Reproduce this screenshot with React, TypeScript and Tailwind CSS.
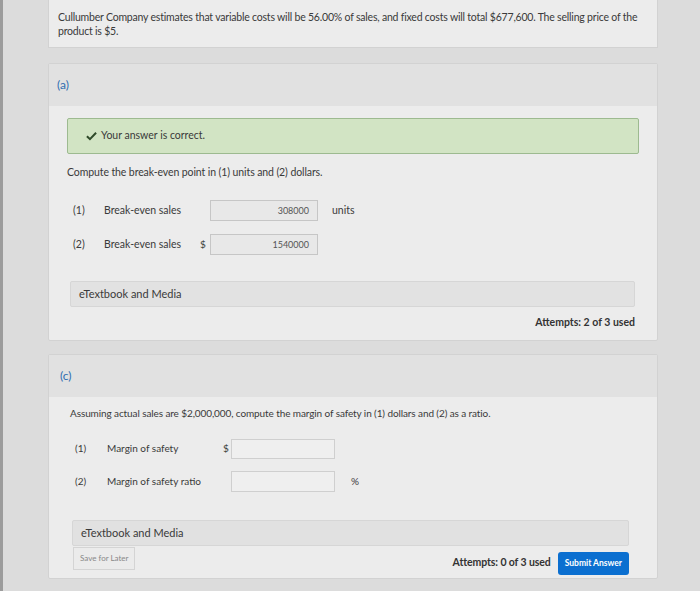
import React from "react";

function Field({ value, w }: { value?: string; w: string }) {
    return (
        <div
            className={`${w} h-[21px] border border-[#c6c6c6] bg-[#e8e8e8] flex items-center justify-end pr-[8px] text-[9px] text-[#555]`}
        >
            {value}
        </div>
    );
}

function CheckIcon() {
    return (
        <svg width="11" height="10" viewBox="0 0 12 10">
            <path
                d="M1 5.2 L4.3 8.4 L11 1.4"
                fill="none"
                stroke="#2f4a2a"
                strokeWidth="2.2"
            />
        </svg>
    );
}

export default function App() {
    return (
        <div className="w-[700px] min-h-[591px] bg-[#dcdcdc] border-l-[3px] border-[#9c9c9c] font-['Lato','Open_Sans',sans-serif] text-[#3a3a3a] overflow-hidden">
            <div className="ml-[45px] mr-[42px] pb-[14px]">
                {/* Problem statement */}
                <div className="h-[48px] bg-[#ececec] border-x border-b border-[#d2d2d2] px-[9px] pt-[10px] text-[10.5px] leading-[14px] tracking-[-0.2px]">
                    <p className="w-[592px]">
                        Cullumber Company estimates that variable costs will be
                        56.00% of sales, and fixed costs will total $677,600.
                        The selling price of the product is $5.
                    </p>
                </div>

                {/* Part (a) */}
                <div className="mt-[15px] bg-[#ececec] border border-[#d2d2d2] rounded-[2px]">
                    <div className="h-[42px] bg-[#e1e1e1] px-[8px] flex items-center text-[12px] text-[#2f6db0]">
                        (a)
                    </div>
                    <div className="pl-[18px] pr-[18px] pt-[12px] pb-[9px] text-[10.5px]">
                        <div className="h-[36px] bg-[#d2e4c4] border border-[#9dba90] rounded-[2px] flex items-center pl-[18px] gap-[4px]">
                            <CheckIcon />
                            <span>Your answer is correct.</span>
                        </div>
                        <p className="mt-[11px] leading-[14px] tracking-[-0.1px]">
                            Compute the break-even point in (1) units and (2)
                            dollars.
                        </p>
                        <div className="mt-[21px] flex items-center">
                            <span className="w-[37px] pl-[6px]">(1)</span>
                            <span className="w-[96px]">Break-even sales</span>
                            <span className="w-[10px]"></span>
                            <Field value="308000" w="w-[108px]" />
                            <span className="ml-[14px]">units</span>
                        </div>
                        <div className="mt-[13px] flex items-center">
                            <span className="w-[37px] pl-[6px]">(2)</span>
                            <span className="w-[96px]">Break-even sales</span>
                            <span className="w-[10px] text-[10px]">$</span>
                            <Field value="1540000" w="w-[108px]" />
                        </div>
                        <div className="mt-[26px] ml-[3px] mr-[4px] h-[26px] bg-[#e2e2e2] border border-[#d6d6d6] rounded-[2px] flex items-center pl-[8px] text-[11px]">
                            eTextbook and Media
                        </div>
                        <div className="mt-[8px] mr-[4px] flex justify-end font-bold text-[10.5px] text-[#333]">
                            Attempts: 2 of 3 used
                        </div>
                    </div>
                </div>

                {/* Part (c) */}
                <div className="mt-[13px] bg-[#ececec] border border-[#d2d2d2] rounded-[2px]">
                    <div className="h-[42px] bg-[#e1e1e1] px-[11px] flex items-center text-[12px] text-[#2f6db0]">
                        (c)
                    </div>
                    <div className="pl-[21px] pr-[28px] pt-[9px] pb-[3px] text-[10px]">
                        <p className="leading-[14px] tracking-[-0.1px]">
                            Assuming actual sales are $2,000,000, compute the
                            margin of safety in (1) dollars and (2) as a ratio.
                        </p>
                        <div className="mt-[19px] flex items-center">
                            <span className="w-[37px] pl-[5px]">(1)</span>
                            <span className="w-[116px]">Margin of safety</span>
                            <span className="w-[8px]">$</span>
                            <div className="w-[104px] h-[20px] border border-[#cfcfcf] bg-[#efefef]"></div>
                        </div>
                        <div className="mt-[12px] flex items-center">
                            <span className="w-[37px] pl-[5px]">(2)</span>
                            <span className="w-[116px]">Margin of safety ratio</span>
                            <span className="w-[8px]"></span>
                            <div className="w-[104px] h-[21px] border border-[#cfcfcf] bg-[#efefef]"></div>
                            <span className="ml-[16px]">%</span>
                        </div>
                        <div className="mt-[28px] ml-[2px] h-[26px] bg-[#e1e1e1] border border-[#d6d6d6] rounded-[2px] flex items-center pl-[8px] text-[11px]">
                            eTextbook and Media
                        </div>
                        <div className="mt-[1px] ml-[3px] flex items-start">
                            <div className="h-[23px] px-[6px] border border-[#d4d4d4] bg-[#ebebeb] flex items-center text-[8px] text-[#888]">
                                Save for Later
                            </div>
                            <div className="ml-auto mt-[5px] flex items-center gap-[7px]">
                                <span className="font-bold text-[10.5px] text-[#333] tracking-[-0.1px]">
                                    Attempts: 0 of 3 used
                                </span>
                                <div className="h-[23px] px-[7px] rounded-[3px] bg-[#0b6fd0] flex items-center text-[8.5px] font-bold text-white">
                                    Submit Answer
                                </div>
                            </div>
                        </div>
                    </div>
                </div>
            </div>
        </div>
    );
}
